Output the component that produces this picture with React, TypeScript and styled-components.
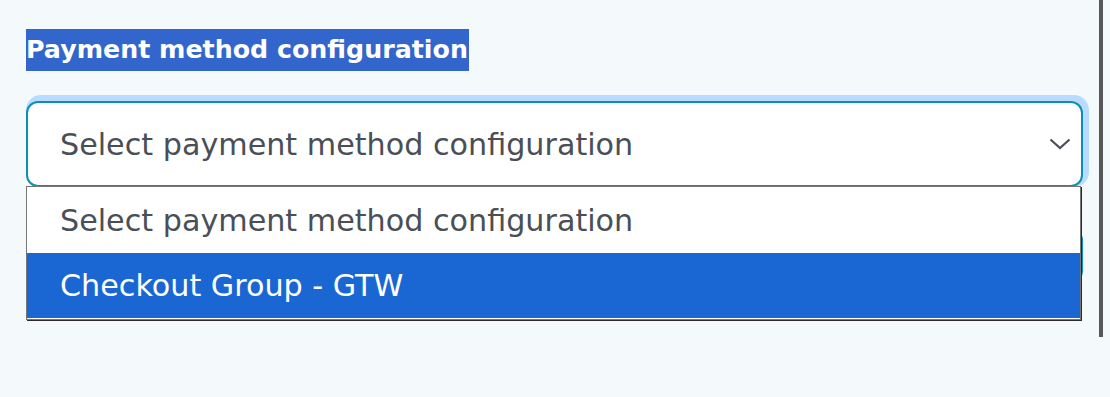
import styled, { createGlobalStyle } from 'styled-components';

const GlobalStyle = createGlobalStyle`
  html, body {
    margin: 0;
    padding: 0;
    background: #f4f9fc;
    font-family: "DejaVu Sans", "Noto Sans", sans-serif;
  }
`;

const options = [
  { id: 1, label: 'Select payment method configuration', active: false },
  { id: 2, label: 'Checkout Group - GTW', active: true },
];

const Page = styled.div`
  width: 1103px;
  height: 337px;
  border-right: 4px solid #555759;
  padding: 29px 0 0 26px;
  box-sizing: border-box;
`;

const Label = styled.label`
  display: inline-block;
  background: #3366cc;
  color: #ffffff;
  font-weight: 700;
  font-size: 25.3px;
  line-height: 42px;
  padding-right: 1px;
`;

const Field = styled.div`
  position: relative;
  width: 1057px;
  margin-top: 30px;
`;

const SelectBox = styled.div`
  height: 86px;
  box-sizing: border-box;
  display: flex;
  align-items: center;
  justify-content: space-between;
  padding: 0 10px 0 32px;
  background: #ffffff;
  border: 2px solid #0b8fb6;
  border-radius: 12px;
  box-shadow: 3px -3px 0 3px #b9dbfd;
  color: #4a4f57;
  font-size: 30.2px;
`;

const Chevron = styled.svg`
  width: 22px;
  height: 12px;
`;

const Behind = styled.div`
  margin-top: 41px;
  height: 55px;
  width: 1057px;
  background: #0b8fb6;
  border-radius: 12px;
`;

const List = styled.ul`
  position: absolute;
  top: 85px;
  left: 0;
  width: 1055px;
  margin: 0;
  padding: 0 0 1px;
  list-style: none;
  background: #ffffff;
  border: 1px solid #767676;
  box-shadow: 1px 1px 0 #2a2a2a;
  box-sizing: border-box;
`;

const Option = styled.li<{ $active: boolean }>`
  height: ${(p) => (p.$active ? 65 : 66)}px;
  display: flex;
  align-items: center;
  padding-left: 33px;
  font-size: 30.2px;
  background: ${(p) => (p.$active ? '#1a67d3' : '#ffffff')};
  color: ${(p) => (p.$active ? '#ffffff' : '#4a4f57')};
`;

export default function App() {
  return (
    <>
      <GlobalStyle />
      <Page>
        <Label>Payment method configuration</Label>
        <Field>
          <SelectBox>
            <span>Select payment method configuration</span>
            <Chevron viewBox="0 0 22 12" fill="none">
              <path d="M1.5 1.5 L11 10 L20.5 1.5" stroke="#4a4f57" strokeWidth="2.2" />
            </Chevron>
          </SelectBox>
          <Behind />
          <List>
            {options.map((o) => (
              <Option key={o.id} $active={o.active}>
                {o.label}
              </Option>
            ))}
          </List>
        </Field>
      </Page>
    </>
  );
}
